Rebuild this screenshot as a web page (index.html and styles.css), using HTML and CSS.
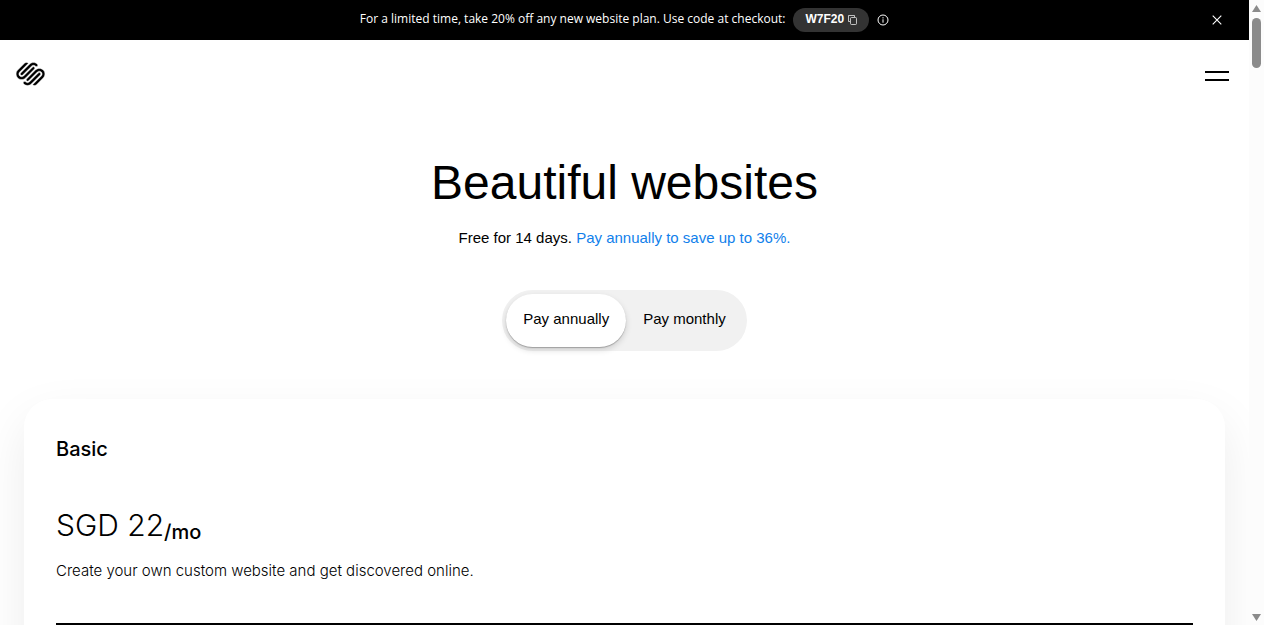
FILE: index.html
```html
<!DOCTYPE html>
<html lang="en">
<head>
    <meta charset="UTF-8">
    <meta name="viewport" content="width=device-width, initial-scale=1.0">
    <title>Pricing</title>
    <link rel="stylesheet" href="styles.css">
</head>
<body>
    <div class="page">
        <div class="promo-bar">
            <p class="promo-text">For a limited time, take 20% off any new website plan. Use code at checkout:</p>
            <button class="promo-code" type="button">
                <span>W7F20</span>
                <svg width="9" height="10" viewBox="0 0 9 10" fill="none" stroke="currentColor" stroke-opacity="0.7" aria-hidden="true">
                    <path d="M2 6.5H.5v-6h6V2"/>
                    <rect x="2.5" y="2.5" width="6" height="7" rx="1"/>
                </svg>
            </button>
            <button class="icon-btn" type="button" aria-label="Offer terms">
                <svg width="12" height="12" viewBox="0 0 12 12" fill="none" stroke="currentColor" aria-hidden="true">
                    <circle cx="6" cy="6" r="5"/>
                    <path d="M6 5.3v3.4M6 3.2v1.2"/>
                </svg>
            </button>
            <button class="icon-btn promo-close" type="button" aria-label="Close">
                <svg width="10" height="10" viewBox="0 0 10 10" fill="none" stroke="currentColor" stroke-width="1.1" aria-hidden="true">
                    <path d="M.7.7l8.6 8.6M9.3.7L.7 9.3"/>
                </svg>
            </button>
        </div>

        <header class="header">
            <a class="logo" href="/" aria-label="Home">
                <svg width="29" height="24" viewBox="0 2 24 20" fill="currentColor" stroke="white" stroke-width="0.4" aria-hidden="true">
                    <path d="M22.655 8.719c-1.802-1.801-4.726-1.801-6.564 0l-7.351 7.35c-.45.45-.45 1.2 0 1.65.45.449 1.2.449 1.65 0l7.351-7.351c.899-.899 2.362-.899 3.264 0 .9.9.9 2.364 0 3.264l-7.239 7.239c.9.899 2.362.899 3.263 0l5.589-5.589c1.836-1.838 1.836-4.763.037-6.563zm-2.475 2.437c-.451-.45-1.201-.45-1.65 0l-7.354 7.389c-.9.899-2.361.899-3.262 0-.45-.45-1.2-.45-1.65 0s-.45 1.2 0 1.649c1.801 1.801 4.726 1.801 6.564 0l7.351-7.35c.449-.487.449-1.239.001-1.688zm-2.439-7.35c-1.801-1.801-4.726-1.801-6.564 0l-7.351 7.351c-.45.449-.45 1.199 0 1.649s1.2.45 1.65 0l7.395-7.351c.9-.899 2.371-.899 3.27 0 .451.45 1.201.45 1.65 0 .421-.487.421-1.199-.05-1.649zm-2.475 2.475c-.45-.449-1.2-.449-1.65 0l-7.351 7.351c-.899.9-2.362.9-3.265 0-.9-.899-.9-2.363 0-3.264l7.239-7.239c-.9-.9-2.362-.9-3.263 0L1.35 8.719c-1.8 1.8-1.8 4.763 0 6.564 1.801 1.801 4.725 1.801 6.564 0l7.351-7.351c.45-.488.45-1.238.001-1.651z"/>
                </svg>
            </a>
            <button class="menu-btn" type="button" aria-label="Menu">
                <span></span>
                <span></span>
            </button>
        </header>

        <main>
            <section class="hero">
                <h1>Beautiful websites</h1>
                <p class="hero-text">Free for 14 days. <a href="#annual">Pay annually to save up to 36%.</a></p>
                <div class="billing">
                    <label class="billing-option">
                        <input type="radio" name="billing" value="annual" checked>
                        <span>Pay annually</span>
                    </label>
                    <label class="billing-option">
                        <input type="radio" name="billing" value="monthly">
                        <span>Pay monthly</span>
                    </label>
                </div>
            </section>

            <section class="plan-card" id="annual">
                <h2>Basic</h2>
                <p class="price">SGD 22<span>/mo</span></p>
                <p class="plan-text">Create your own custom website and get discovered online.</p>
                <hr>
            </section>
        </main>
    </div>

    <div class="scrollbar" aria-hidden="true">
        <svg width="9" height="7" viewBox="0 0 9 7"><path d="M4.5 0L9 7H0z"/></svg>
        <div class="scrollbar-thumb"></div>
        <svg width="9" height="7" viewBox="0 0 9 7"><path d="M4.5 7L9 0H0z"/></svg>
    </div>
</body>
</html>
```
FILE: styles.css
```css
* {
    box-sizing: border-box;
}
body {
    display: grid;
    grid-template-columns: 1fr 15px;
    height: 100vh;
    margin: 0;
    overflow: hidden;
    background: white;
    color: black;
    font-family: "Liberation Sans", Arial, sans-serif;
    font-size: 15px;
    line-height: 24px;
}
h1, h2, p {
    margin: 0;
}
button {
    padding: 0;
    border: 0;
    background: none;
    color: inherit;
    font: inherit;
    cursor: pointer;
}
svg {
    display: block;
}
.page {
    min-width: 0;
    overflow: hidden;
}
.promo-bar {
    position: relative;
    display: flex;
    align-items: center;
    justify-content: center;
    gap: 8px;
    height: 40px;
    background: black;
    color: white;
}
.promo-text {
    padding-bottom: 2px;
    font-family: "Open Sans", sans-serif;
    font-size: 12px;
    font-weight: 500;
}
.promo-code {
    display: flex;
    align-items: center;
    gap: 4px;
    height: 24px;
    padding: 0 12px;
    border-radius: 12px;
    background: #333;
    font-size: 12px;
    font-weight: 600;
}
.promo-code span {
    padding-bottom: 2px;
}
.promo-close {
    position: absolute;
    right: 27px;
}
.header {
    display: flex;
    align-items: center;
    justify-content: space-between;
    height: 72px;
    padding: 0 20px 4px 16px;
}
.logo {
    color: black;
}
.menu-btn {
    display: grid;
    gap: 6px;
    width: 24px;
    padding-top: 4px;
}
.menu-btn span {
    height: 2px;
    background: black;
}
.hero {
    display: flex;
    flex-direction: column;
    align-items: center;
    padding: 40px 24px 48px;
    text-align: center;
}
h1 {
    font-size: 48px;
    font-weight: 400;
    line-height: 62px;
}
.hero-text {
    margin-top: 12px;
}
.hero-text a {
    color: #117feb;
    text-decoration: none;
}
.billing {
    display: flex;
    margin-top: 40px;
    padding: 4px;
    border-radius: 32px;
    background: #f1f1f1;
}
.billing-option {
    cursor: pointer;
}
.billing-option input {
    position: absolute;
    opacity: 0;
}
.billing-option span {
    display: block;
    padding: 13px 17px 16px;
    border-radius: 28px;
}
.billing-option input:checked + span {
    background: white;
    box-shadow: 0 1px 1px rgba(0,0,0,0.25), 0 3px 6px rgba(0,0,0,0.15);
}
.plan-card {
    margin: 0 24px;
    padding: 32px 32px 48px;
    border-radius: 28px;
    background: white;
    box-shadow: 0 20px 50px rgba(0,0,0,0.08);
    font-family: Inter, "Liberation Sans", Arial, sans-serif;
}
h2 {
    font-size: 20px;
    font-weight: 500;
    line-height: 36px;
}
.price {
    display: flex;
    align-items: flex-end;
    margin-top: 36px;
    font-size: 30px;
    font-weight: 300;
    line-height: 44px;
}
.price span {
    font-size: 20px;
    font-weight: 500;
    line-height: 30px;
}
.plan-text {
    margin-top: 12px;
    font-weight: 300;
}
hr {
    height: 2px;
    margin: 40px 0 0;
    border: 0;
    background: black;
}
.scrollbar {
    display: flex;
    flex-direction: column;
    align-items: center;
    padding: 5px 0 4px;
    background: #fcfcfc;
    fill: #8b8b8b;
}
.scrollbar-thumb {
    width: 9px;
    height: 50px;
    margin: 6px 0 auto;
    border-radius: 5px;
    background: #8b8b8b;
}
```
